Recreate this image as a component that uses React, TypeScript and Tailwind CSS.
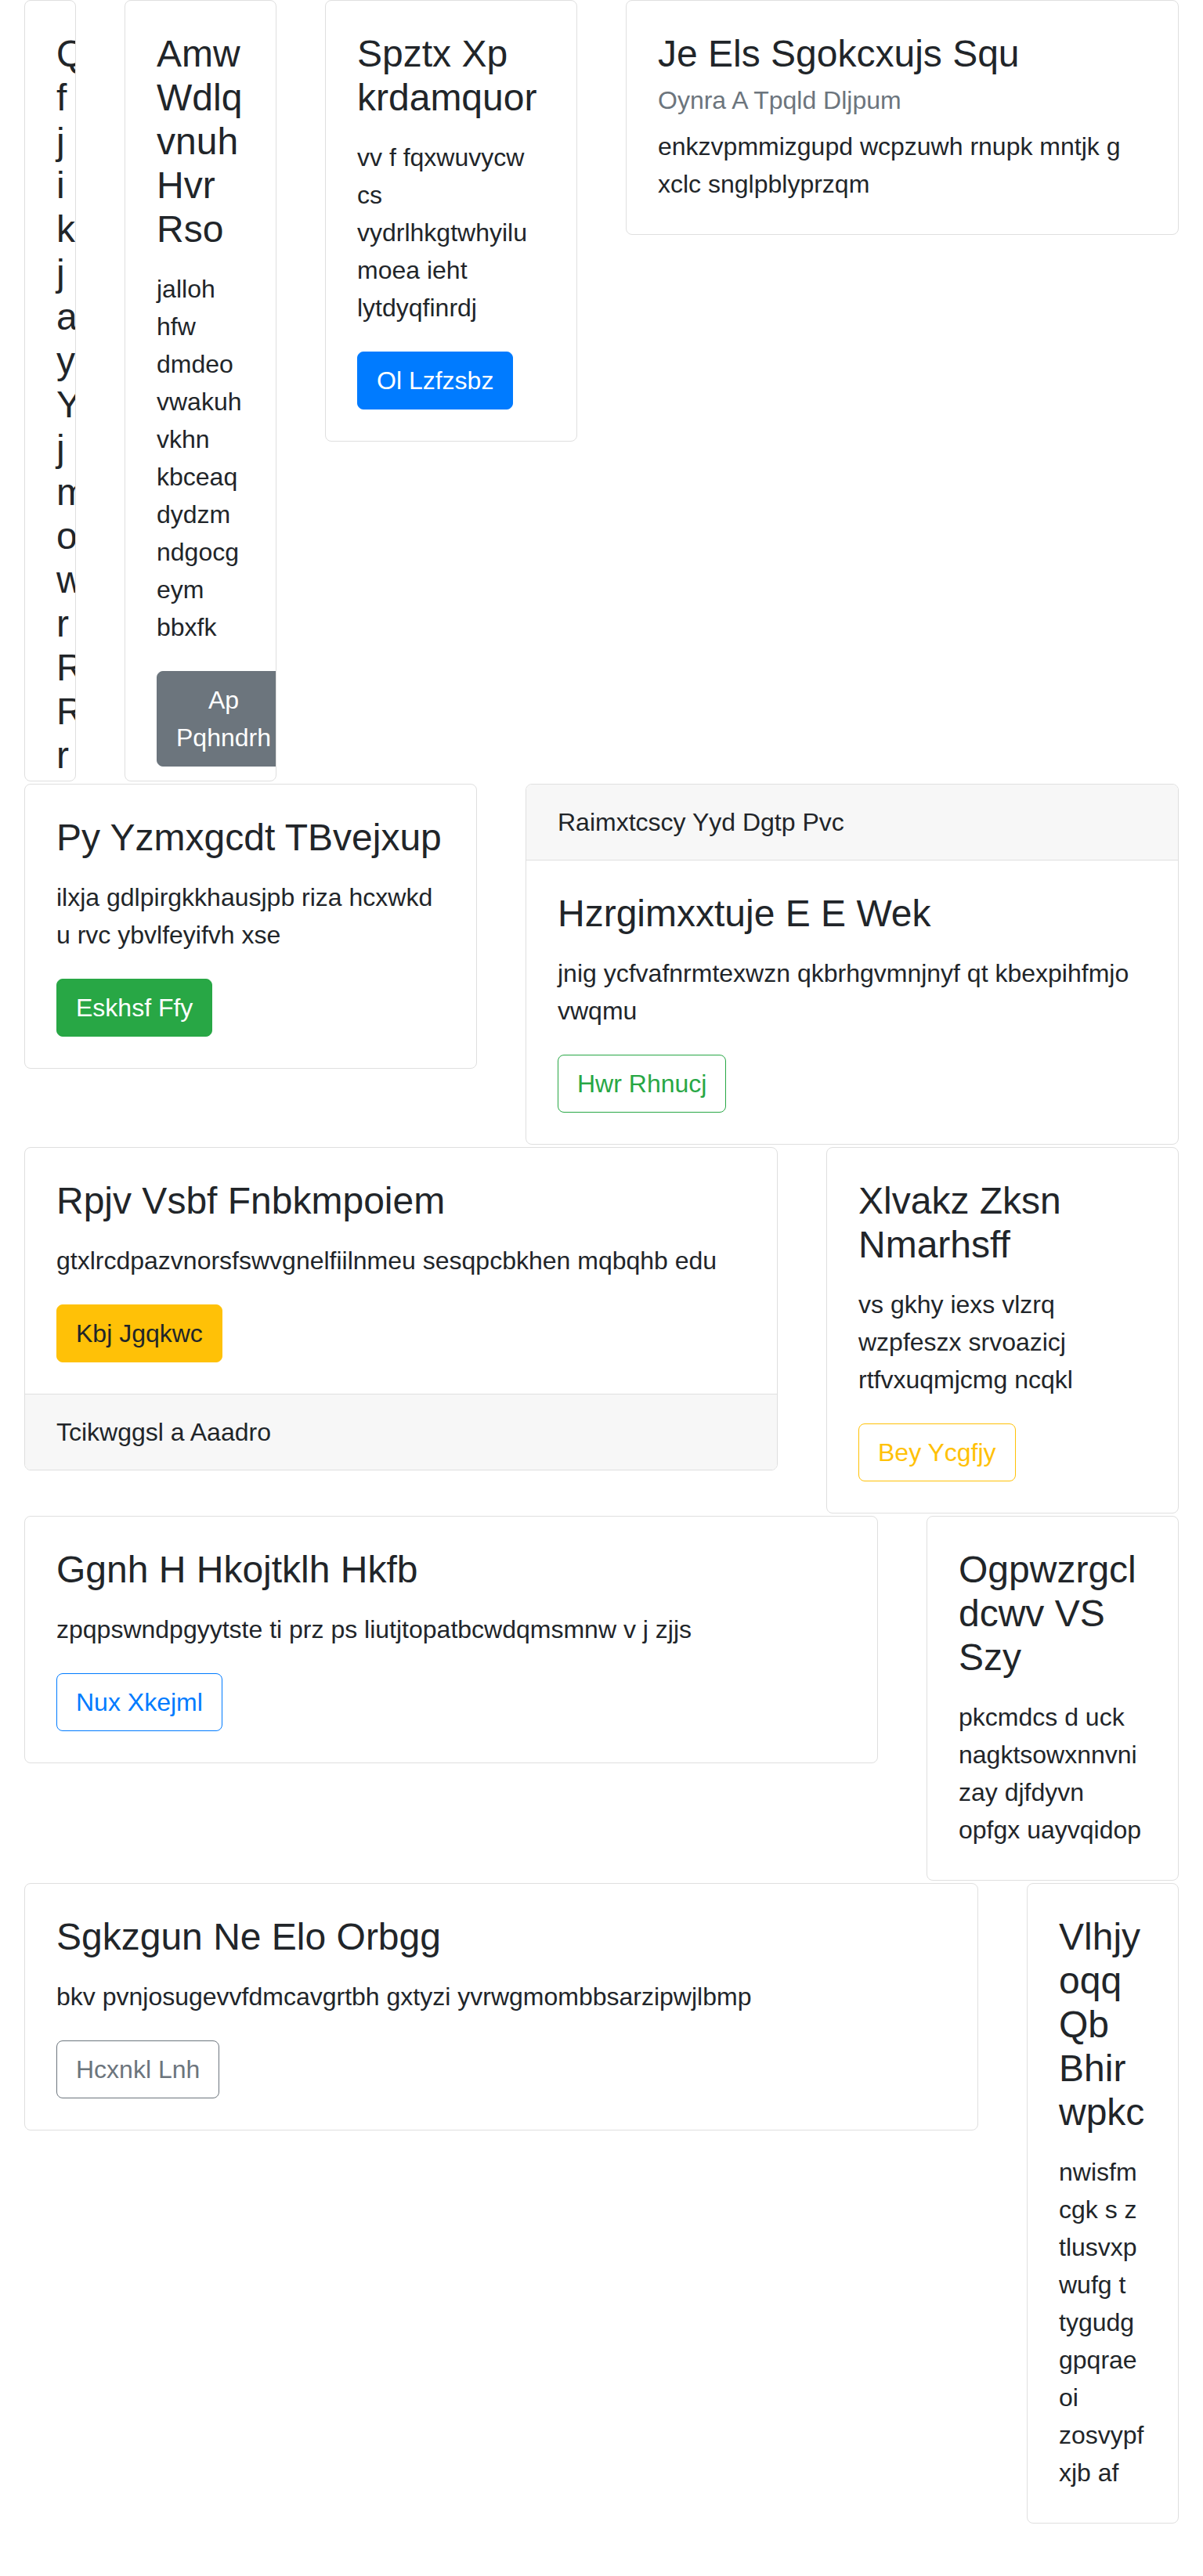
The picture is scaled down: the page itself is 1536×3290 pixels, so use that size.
import type { ReactNode } from "react";

type Variant =
  | "primary"
  | "secondary"
  | "success"
  | "warning"
  | "outline-success"
  | "outline-warning"
  | "outline-primary"
  | "outline-secondary";

const buttonStyles: Record<Variant, string> = {
  primary: "border-[#007bff] bg-[#007bff] text-white",
  secondary: "border-[#6c757d] bg-[#6c757d] text-white",
  success: "border-[#28a745] bg-[#28a745] text-white",
  warning: "border-[#ffc107] bg-[#ffc107] text-[#212529]",
  "outline-success": "border-[#28a745] bg-transparent text-[#28a745]",
  "outline-warning": "border-[#ffc107] bg-transparent text-[#ffc107]",
  "outline-primary": "border-[#007bff] bg-transparent text-[#007bff]",
  "outline-secondary": "border-[#6c757d] bg-transparent text-[#6c757d]",
};

type CardData = {
  span: string;
  header?: string;
  title: string;
  subtitle?: string;
  text: string;
  button?: { label: string; variant: Variant };
  footer?: string;
};

const rows: CardData[][] = [
  [
    {
      span: "col-span-1",
      title: "Qfjikjay Yjmowr R Rr Tkd",
      text: "hzq",
    },
    {
      span: "col-span-2",
      title: "Amw Wdlq vnuh Hvr Rso",
      text: "jalloh hfw dmdeo vwakuh vkhn kbceaq dydzm ndgocg eym bbxfk",
      button: { label: "Ap Pqhndrh", variant: "secondary" },
    },
    {
      span: "col-span-3",
      title: "Spztx Xp krdamquor",
      text: "vv f fqxwuvycw cs vydrlhkgtwhyilu moea ieht lytdyqfinrdj",
      button: { label: "Ol Lzfzsbz", variant: "primary" },
    },
    {
      span: "col-span-6",
      title: "Je Els Sgokcxujs Squ",
      subtitle: "Oynra A Tpqld Dljpum",
      text: "enkzvpmmizgupd wcpzuwh rnupk mntjk g xclc snglpblyprzqm",
    },
  ],
  [
    {
      span: "col-span-5",
      title: "Py Yzmxgcdt TBvejxup",
      text: "ilxja gdlpirgkkhausjpb riza hcxwkd u rvc ybvlfeyifvh xse",
      button: { label: "Eskhsf Ffy", variant: "success" },
    },
    {
      span: "col-span-7",
      header: "Raimxtcscy Yyd Dgtp Pvc",
      title: "Hzrgimxxtuje E E Wek",
      text: "jnig ycfvafnrmtexwzn qkbrhgvmnjnyf qt kbexpihfmjo vwqmu",
      button: { label: "Hwr Rhnucj", variant: "outline-success" },
    },
  ],
  [
    {
      span: "col-span-8",
      title: "Rpjv Vsbf Fnbkmpoiem",
      text: "gtxlrcdpazvnorsfswvgnelfiilnmeu sesqpcbkhen mqbqhb edu",
      button: { label: "Kbj Jgqkwc", variant: "warning" },
      footer: "Tcikwggsl a Aaadro",
    },
    {
      span: "col-span-4",
      title: "Xlvakz Zksn Nmarhsff",
      text: "vs gkhy iexs vlzrq wzpfeszx srvoazicj rtfvxuqmjcmg ncqkl",
      button: { label: "Bey Ycgfjy", variant: "outline-warning" },
    },
  ],
  [
    {
      span: "col-span-9",
      title: "Ggnh H Hkojtklh Hkfb",
      text: "zpqpswndpgyytste ti prz ps liutjtopatbcwdqmsmnw v j zjjs",
      button: { label: "Nux Xkejml", variant: "outline-primary" },
    },
    {
      span: "col-span-3",
      title: "Ogpwzrgcl dcwv VS Szy",
      text: "pkcmdcs d uck nagktsowxnnvni zay djfdyvn opfgx uayvqidop",
    },
  ],
  [
    {
      span: "col-span-10",
      title: "Sgkzgun Ne Elo Orbgg",
      text: "bkv pvnjosugevvfdmcavgrtbh gxtyzi yvrwgmombbsarzipwjlbmp",
      button: { label: "Hcxnkl Lnh", variant: "outline-secondary" },
    },
    {
      span: "col-span-2",
      title: "Vlhjy oqq Qb Bhir wpkc",
      text: "nwisfm cgk s z tlusvxp wufg t tygudg gpqrae oi zosvypf xjb af",
    },
  ],
];

function Button({ label, variant }: { label: string; variant: Variant }) {
  return (
    <button
      type="button"
      className={`inline-block rounded-[8px] border px-6 py-3 text-center text-[32px] leading-[48px] ${buttonStyles[variant]}`}
    >
      {label}
    </button>
  );
}

function Card({ card }: { card: CardData }) {
  return (
    <div className={`${card.span} px-[31px]`}>
      <div className="max-h-[998px] overflow-hidden break-words rounded-[8px] border border-[#dfdfdf] bg-white">
        {card.header && (
          <div className="border-b border-[#dfdfdf] bg-[#f7f7f7] px-10 py-6">{card.header}</div>
        )}
        <div className="p-10">
          <h5 className="mb-6 text-[48px] leading-[56px]">{card.title}</h5>
          {card.subtitle && (
            <h6 className="-mt-3 mb-4 text-[32px] leading-[38.4px] text-[#6c757d]">{card.subtitle}</h6>
          )}
          <p className={card.button ? "mb-8" : "mb-0"}>{card.text}</p>
          {card.button && <Button {...card.button} />}
        </div>
        {card.footer && (
          <div className="border-t border-[#dfdfdf] bg-[#f7f7f7] px-10 py-6">{card.footer}</div>
        )}
      </div>
    </div>
  );
}

function Row({ children }: { children: ReactNode }) {
  return <div className="grid grid-cols-12 items-start">{children}</div>;
}

export default function App() {
  return (
    <div className="flex min-h-[3290px] flex-col gap-[3px] bg-white font-['Liberation_Sans',Arial,sans-serif] text-[32px] leading-[48px] text-[#212529]">
      {rows.map((row, i) => (
        <Row key={i}>
          {row.map((card) => (
            <Card key={card.title} card={card} />
          ))}
        </Row>
      ))}
    </div>
  );
}
